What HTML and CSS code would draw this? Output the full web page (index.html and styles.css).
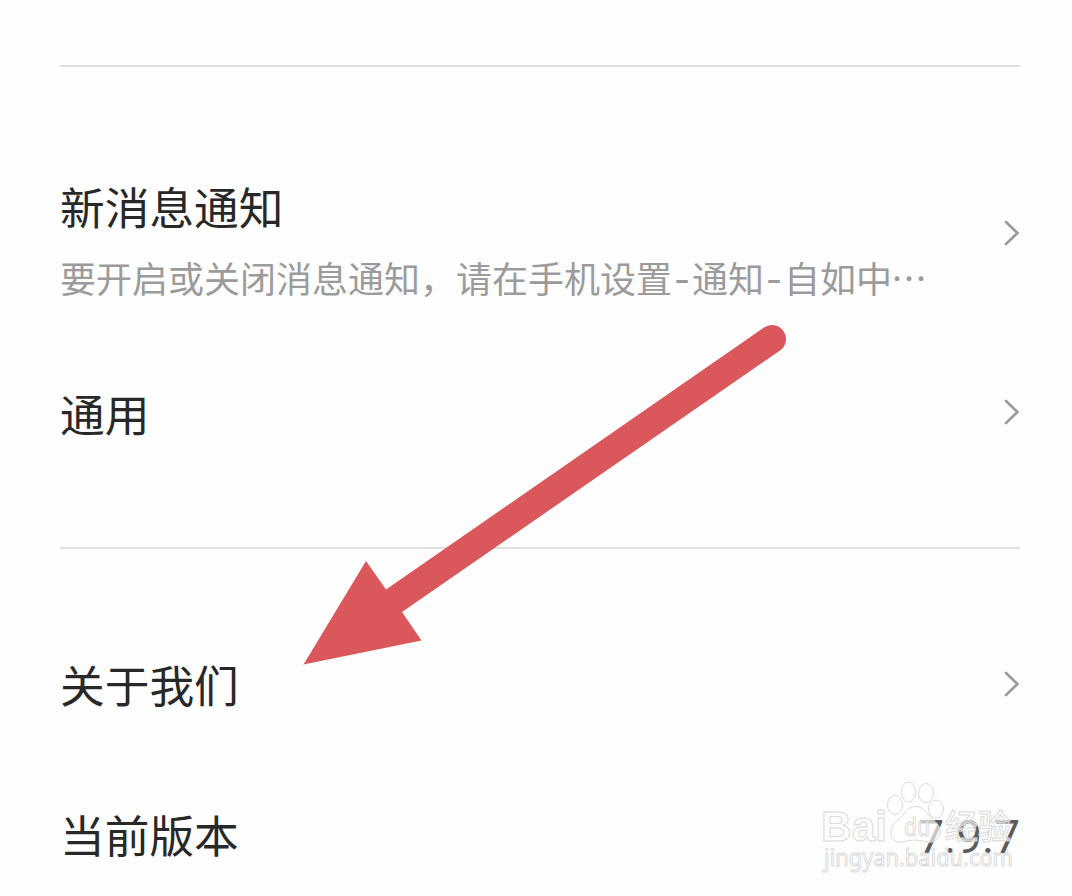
FILE: index.html
```html
<!DOCTYPE html>
<html lang="zh-CN">
<head>
<meta charset="utf-8">
<title>设置</title>
<link rel="stylesheet" href="styles.css">
</head>
<body>
<main class="settings">
  <section class="group group-top"></section>
  <section class="group group-middle">
    <div class="row row-notify">
      <div class="label">
        <h2 class="title">新消息通知</h2>
        <p class="note">要开启或关闭消息通知，请在手机设置<span class="dash">-</span>通知<span class="dash">-</span>自如中<span class="more">…</span></p>
      </div>
      <svg class="chevron" viewBox="0 0 16 26"><path d="M2 2 13.500 13 2 24"/></svg>
    </div>
    <div class="row row-general">
      <h2 class="title">通用</h2>
      <svg class="chevron" viewBox="0 0 16 26"><path d="M2 2 13.500 13 2 24"/></svg>
    </div>
  </section>
  <section class="group group-about">
    <div class="row row-about">
      <h2 class="title">关于我们</h2>
      <svg class="chevron" viewBox="0 0 16 26"><path d="M2 2 13.500 13 2 24"/></svg>
    </div>
    <div class="row row-version">
      <h2 class="title">当前版本</h2>
      <span class="version">7.9.7</span>
    </div>
  </section>
</main>
<svg class="arrow" viewBox="0 0 1072 896">
  <path d="M303.500 664.500 366 561 386 589.500 764 327.500A14 14 0 0 1 780 350.500L402 612 421.500 640.500Z"/>
</svg>
<svg class="watermark" viewBox="0 0 210 110">
  <g class="mark">
    <text class="brand" x="21" y="71" textLength="66" lengthAdjust="spacingAndGlyphs">Bai</text>
    <ellipse cx="95" cy="35" rx="7.500" ry="9.500"/>
    <ellipse cx="108.500" cy="22" rx="7" ry="10"/>
    <ellipse cx="126" cy="23" rx="7.500" ry="9.500"/>
    <ellipse cx="136" cy="39" rx="7.500" ry="9"/>
    <path d="M116 36.500C123 36.500 127 43 131 48C137 53 141 57 140 63C138 70 134 73 128 72C123 71 119 70 114 70C108 70 104 73 99 72C91 71 89 63 93 56C98 49 101 48 105 42C108 38 112 36.500 116 36.500Z"/>
    <text class="du" x="104" y="66" textLength="26" lengthAdjust="spacingAndGlyphs">du</text>
    <text class="cn" x="145" y="69" textLength="66" lengthAdjust="spacingAndGlyphs">经验</text>
    <text class="site" x="24" y="96" textLength="189" lengthAdjust="spacingAndGlyphs">jingyan.baidu.com</text>
  </g>
</svg>
</body>
</html>
```
FILE: styles.css
```css
* { box-sizing: border-box; }

body {
  margin: 0;
  position: relative;
  height: 896px;
  overflow: hidden;
  background: #fefefe;
  font-family: "Noto Sans CJK SC", sans-serif;
  color: #282828;
}

h2, p { margin: 0; font-weight: 400; }

.settings { padding: 0 52px 0 60px; }

.group { border-bottom: 2px solid #dfdfdf; }
.group-top { height: 67px; }
.group-middle { height: 482px; padding-top: 108px; }
.group-about { border: 0; padding-top: 101px; }

.row {
  display: flex;
  align-items: center;
  justify-content: space-between;
}
.row-notify { height: 130px; }
.row-notify .chevron { margin-top: -15px; }
.row-general { height: 64px; margin-top: 76px; }
.row-general .chevron { margin-top: -3px; }
.row-about { height: 68px; }
.row-version { height: 68px; margin-top: 82px; }

.title {
  font-size: 44.7px;
  line-height: 64px;
  white-space: nowrap;
}

.note {
  margin-top: 13px;
  font-size: 36px;
  line-height: 52px;
  color: #9b9b9b;
  white-space: nowrap;
}

.dash {
  display: inline-block;
  width: 20px;
  text-align: center;
  font-family: Inter, sans-serif;
}

.more { display: inline-block; margin-left: -1px; }

.chevron {
  width: 16px;
  height: 26px;
  fill: none;
  stroke: #999;
  stroke-width: 2.6;
  stroke-linecap: round;
}

.version {
  margin-top: 6px;
  font-family: Roboto, sans-serif;
  font-size: 46px;
  line-height: 64px;
  color: #5c5c5c;
}

.arrow {
  position: absolute;
  inset: 0;
  width: 1072px;
  height: 896px;
  fill: #da575c;
}

.watermark {
  position: absolute;
  left: 800px;
  top: 770px;
  width: 210px;
  height: 110px;
  overflow: visible;
}

.mark {
  fill: rgba(255, 255, 255, 0.65);
  stroke: #dadada;
  stroke-width: 1;
}
.brand { font: 700 43px "Liberation Sans", sans-serif; }
.du { font: 400 25px "Noto Sans", sans-serif; }
.cn { font: 500 34px "Noto Sans CJK SC", sans-serif; }
.site { font: 400 24px "Noto Sans", sans-serif; }
```
